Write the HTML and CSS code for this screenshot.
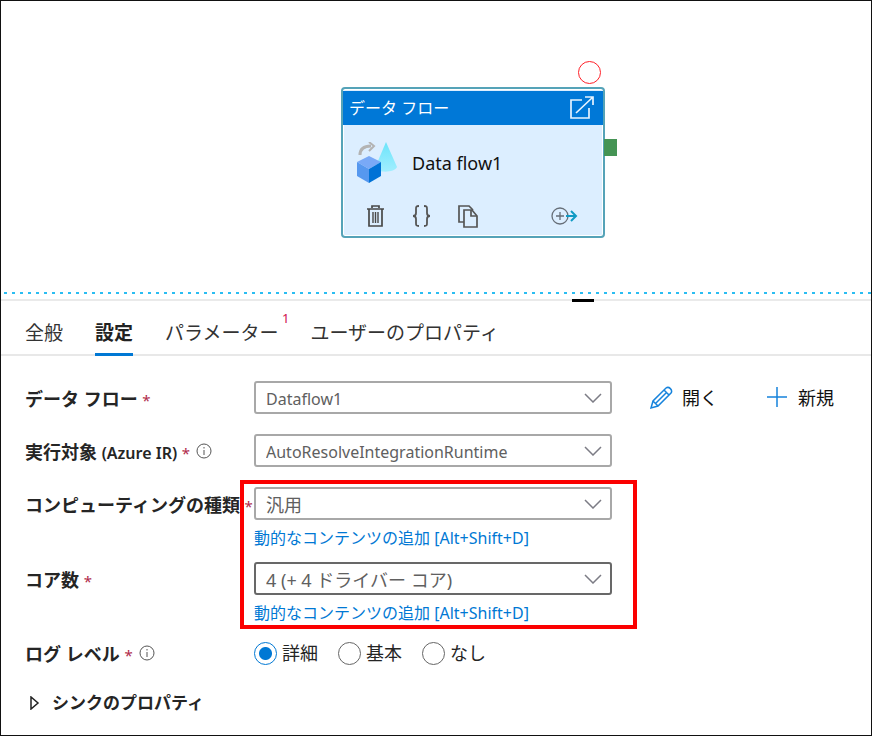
FILE: index.html
```html
<!DOCTYPE html>
<html lang="ja">
<head>
<meta charset="utf-8">
<meta name="viewport" content="width=device-width, initial-scale=1">
<title>データ フロー</title>
<link rel="stylesheet" href="styles.css">
</head>
<body>
<main class="app">
  <section class="canvas" aria-label="キャンバス">
    <span class="breakpoint"></span>
    <article class="node">
      <header class="node-header">
        <h2 class="node-type">データ フロー</h2>
        <button class="icon-button" type="button" aria-label="開く">
          <svg width="26" height="26" viewBox="0 0 26 26" fill="none" stroke="#e6f3ff" stroke-width="1.7"><path d="M13 5H2v18h18V13"/><path d="M7 18 24 2M16 2h8v8"/></svg>
        </button>
      </header>
      <div class="node-body">
        <svg width="42" height="42" viewBox="0 0 42 42">
          <defs><linearGradient id="cone" x1="0" y1="0" x2="0" y2="1"><stop offset="0" stop-color="#6be4fa"/><stop offset="1" stop-color="#a2eeff"/></linearGradient></defs>
          <path d="M30 0 19 26c2 5 20 5 22-1z" fill="url(#cone)"/>
          <path d="M4 13C4 7 8 4 15 4" fill="none" stroke="#b3b3b3" stroke-width="3"/>
          <path d="m13 0 5 4-5 5" fill="none" stroke="#b3b3b3" stroke-width="2"/>
          <path d="m13 14 12 6-12 7-12-7z" fill="#79a9f7"/>
          <path d="m1 20 12 7v14L1 34z" fill="#5698ef"/>
          <path d="m25 20-12 7v14l12-7z" fill="#0072d6"/>
        </svg>
        <span class="node-name">Data flow1</span>
      </div>
      <footer class="node-tools">
        <button class="icon-button" type="button" aria-label="削除">
          <svg width="20" height="24" viewBox="0 0 20 24" fill="none" stroke="#484848" stroke-width="1.7"><path d="M1 5h17M6 4V2h7v2M3 5v17h13V5"/><path d="M7 8v11M9.500 8v11M12 8v11" stroke-width="1.4"/></svg>
        </button>
        <button class="icon-button" type="button" aria-label="コード">
          <svg width="20" height="24" viewBox="0 0 20 24" fill="none" stroke="#555" stroke-width="1.8"><path d="M7 2C4 2 4 3 4 5v4c0 2-1 3-3 3 2 0 3 1 3 3v4c0 2 0 3 3 3M12 2c3 0 3 1 3 3v4c0 2 1 3 3 3-2 0-3 1-3 3v4c0 2 0 3-3 3"/></svg>
        </button>
        <button class="icon-button" type="button" aria-label="複製">
          <svg width="22" height="24" viewBox="0 0 22 24" fill="none" stroke="#555" stroke-width="1.7"><path d="M6 18H1V2h10l4 4"/><path d="M6 6h8l5 6v11H6z"/><path d="M13 6v6h6"/></svg>
        </button>
        <button class="icon-button tool-last" type="button" aria-label="出力の追加">
          <svg width="28" height="20" viewBox="0 0 28 20" fill="none" stroke="#666e78" stroke-width="1.3"><circle cx="9" cy="10" r="8"/><path d="M5 10h8M9 6v8"/><path d="M15 10h10M20 5l5 5-5 5" stroke="#0f9ac4" stroke-width="2"/></svg>
        </button>
      </footer>
      <span class="port"></span>
    </article>
  </section>
  <div class="splitter"><span class="splitter-grip"></span></div>
  <nav class="tabs">
    <a class="tab" href="#general">全般</a>
    <a class="tab tab-active" href="#settings" aria-current="page">設定</a>
    <a class="tab" href="#parameters">パラメーター<sup class="tab-count">1</sup></a>
    <a class="tab" href="#user">ユーザーのプロパティ</a>
  </nav>
  <form class="form" id="settings">
    <div class="row">
      <label class="label" for="flow">データ フロー <span class="required">*</span></label>
      <div class="field"><select class="select" id="flow"><option>Dataflow1</option></select><svg class="chevron" width="18" height="10" viewBox="0 0 18 10"><path d="m1 1 8 8 8-8"/></svg></div>
      <div class="actions">
        <button class="action" type="button"><svg width="24" height="24" viewBox="0 0 24 24" fill="none" stroke="#1683dc" stroke-width="1.5"><path d="m1 22 2-7L16 2c3-2 7 2 5 5L8 20zM14 4l5 5M3 15l5 5M5 18 17 6"/></svg>開く</button>
        <button class="action" type="button"><svg width="24" height="24" viewBox="0 0 24 24" fill="none" stroke="#1683dc" stroke-width="1.5"><path d="M11 1v20M1 11h20"/></svg>新規</button>
      </div>
    </div>
    <div class="row">
      <label class="label" for="runtime">実行対象 <span class="latin">(Azure IR)</span> <span class="required">*</span><svg class="info" width="16" height="16" viewBox="0 0 16 16"><circle cx="8" cy="8" r="7"/><path d="M8 7v5M8 4v1.500"/></svg></label>
      <div class="field"><select class="select" id="runtime"><option>AutoResolveIntegrationRuntime</option></select><svg class="chevron" width="18" height="10" viewBox="0 0 18 10"><path d="m1 1 8 8 8-8"/></svg></div>
    </div>
    <div class="group">
      <div class="row">
        <label class="label" for="compute">コンピューティングの種類 <span class="required">*</span></label>
        <div class="field"><select class="select select-large" id="compute"><option>汎用</option></select><svg class="chevron" width="18" height="10" viewBox="0 0 18 10"><path d="m1 1 8 8 8-8"/></svg></div>
        <a class="dynamic" href="#compute">動的なコンテンツの追加 <span class="keys">[Alt+Shift+D]</span></a>
      </div>
      <div class="row">
        <label class="label" for="cores">コア数 <span class="required">*</span></label>
        <div class="field"><select class="select select-large select-strong" id="cores"><option>4 (+ 4 ドライバー コア)</option></select><svg class="chevron" width="18" height="10" viewBox="0 0 18 10"><path d="m1 1 8 8 8-8"/></svg></div>
        <a class="dynamic" href="#cores">動的なコンテンツの追加 <span class="keys">[Alt+Shift+D]</span></a>
      </div>
    </div>
    <div class="row row-log" role="radiogroup" aria-labelledby="log-label">
      <span class="label" id="log-label">ログ レベル <span class="required">*</span><svg class="info" width="16" height="16" viewBox="0 0 16 16"><circle cx="8" cy="8" r="7"/><path d="M8 7v5M8 4v1.500"/></svg></span>
      <div class="radios">
        <label class="choice"><input class="radio" type="radio" name="log" checked>詳細</label>
        <label class="choice"><input class="radio" type="radio" name="log">基本</label>
        <label class="choice"><input class="radio" type="radio" name="log">なし</label>
      </div>
    </div>
    <button class="expander" type="button" aria-expanded="false"><svg width="10" height="14" viewBox="0 0 10 14" fill="none" stroke="#222" stroke-width="1.5"><path d="M1 1v12l7-6z"/></svg>シンクのプロパティ</button>
  </form>
</main>
</body>
</html>
```
FILE: styles.css
```css
*, *::before, *::after { box-sizing: border-box; }

body {
  margin: 0;
  background: #fff;
  color: #252525;
  font: 18px/24px "Noto Sans", "Noto Sans CJK JP", sans-serif;
}

button, select, input { font: inherit; color: inherit; }

.app {
  min-height: 100vh;
  border: 1px solid #111;
}

/* Canvas */
.canvas {
  position: relative;
  height: 298px;
  background: repeating-linear-gradient(90deg, transparent 0 3px, #2bbdf2 3px 6px, transparent 6px 8px) 0 291px / 100% 2px no-repeat;
}

.breakpoint {
  position: absolute;
  left: 577px;
  top: 60px;
  width: 23px;
  height: 23px;
  border: 1px solid #ff2028;
  border-radius: 50%;
}

.node {
  position: absolute;
  left: 340px;
  top: 86px;
  width: 264px;
  height: 151px;
  padding: 2px 0 0;
  border: 2px solid #55a3b8;
  border-radius: 4px;
  background: #dceeff;
  box-shadow: inset 0 0 0 1px #fff;
}

.node-header {
  display: flex;
  align-items: center;
  justify-content: space-between;
  height: 34px;
  padding: 0 8px 0 6px;
  background: #0078d7;
  color: #fff;
}

.node-type { margin: 0; font-size: 16px; font-weight: 400; }

.icon-button {
  display: flex;
  padding: 0;
  border: 0;
  background: none;
}

.node-body {
  display: flex;
  align-items: center;
  gap: 14px;
  height: 76px;
  padding: 0 13px;
}

.node-name { color: #111; }

.node-tools {
  display: flex;
  align-items: center;
  gap: 26px;
  padding: 3px 24px 0 23px;
}

.tool-last { margin-left: auto; }

.port {
  position: absolute;
  left: 261px;
  top: 50px;
  width: 13px;
  height: 17px;
  background: #459454;
}

.splitter {
  display: flex;
  height: 3px;
  padding-left: 571px;
  background: linear-gradient(#eaeaea, #eaeaea) 0 0 / 100% 2px no-repeat;
}

.splitter-grip { width: 22px; height: 3px; background: #000; }

/* Tabs */
.tabs {
  display: flex;
  gap: 32px;
  padding: 16px 24px 0;
  border-bottom: 2px solid #e8e8e8;
}

.tab {
  position: relative;
  height: 38px;
  margin-bottom: -2px;
  padding-top: 3px;
  color: #333;
  font-size: 19px;
  text-decoration: none;
}

.tab-active {
  border-bottom: 3px solid #0078d4;
  color: #222;
  font-weight: 700;
}

.tab-count {
  position: absolute;
  right: -11px;
  top: -8px;
  color: #d0104c;
  font-size: 13px;
  line-height: 16px;
}

/* Settings form */
.form {
  display: flex;
  flex-direction: column;
  gap: 20px;
  padding: 25px 24px 20px;
}

.row {
  display: grid;
  grid-template-columns: 229px minmax(0, 358px) auto;
  align-items: center;
}

.label {
  padding-top: 3px;
  font-weight: 600;
  white-space: nowrap;
}

.latin { font-size: 16px; }

.required {
  color: #b02a4a;
  font-size: 15px;
  font-weight: 400;
}

.info {
  margin-left: 6px;
  fill: none;
  stroke: #555;
}

.field { display: grid; align-items: center; }

.select {
  grid-area: 1 / 1;
  width: 100%;
  height: 33px;
  padding: 3px 40px 0 10px;
  border: 2px solid #a8a8a8;
  border-radius: 3px;
  appearance: none;
  background: #fff;
  color: #606060;
  font-size: 16px;
}

.select-large { padding-top: 2px; font-size: 18px; }

.select-strong { border-color: #686868; }

.chevron {
  grid-area: 1 / 1;
  justify-self: end;
  margin-right: 10px;
  fill: none;
  stroke: #7c7c85;
  stroke-width: 1.5;
  pointer-events: none;
}

.actions { display: flex; gap: 48px; padding-left: 38px; }

.action {
  display: flex;
  align-items: center;
  gap: 8px;
  padding: 0;
  border: 0;
  background: none;
  color: #111;
  white-space: nowrap;
}

.group {
  position: relative;
  display: flex;
  flex-direction: column;
  gap: 12px;
}

.group::after {
  content: "";
  position: absolute;
  left: 215px;
  top: -7px;
  width: 397px;
  bottom: -4px;
  border: 4px solid #fb0000;
  pointer-events: none;
}

.dynamic {
  grid-column: 2;
  justify-self: start;
  margin-top: 6px;
  color: #0078d4;
  font-size: 16px;
  text-decoration: none;
}

.row-log { margin-top: -6px; }

.radios { display: flex; gap: 20px; }

.choice {
  display: flex;
  align-items: center;
  gap: 5px;
  white-space: nowrap;
}

.radio {
  width: 23px;
  height: 23px;
  margin: 0;
  border: 1px solid #666;
  border-radius: 50%;
  appearance: none;
}

.radio:checked {
  border-color: #0078d4;
  background: radial-gradient(#0078d4 0 6px, #fff 7px);
}

.expander {
  display: flex;
  align-items: center;
  align-self: start;
  gap: 12px;
  margin: 4px 0 0 5px;
  padding: 0;
  border: 0;
  background: none;
  font-size: 17px;
  font-weight: 600;
}
```
